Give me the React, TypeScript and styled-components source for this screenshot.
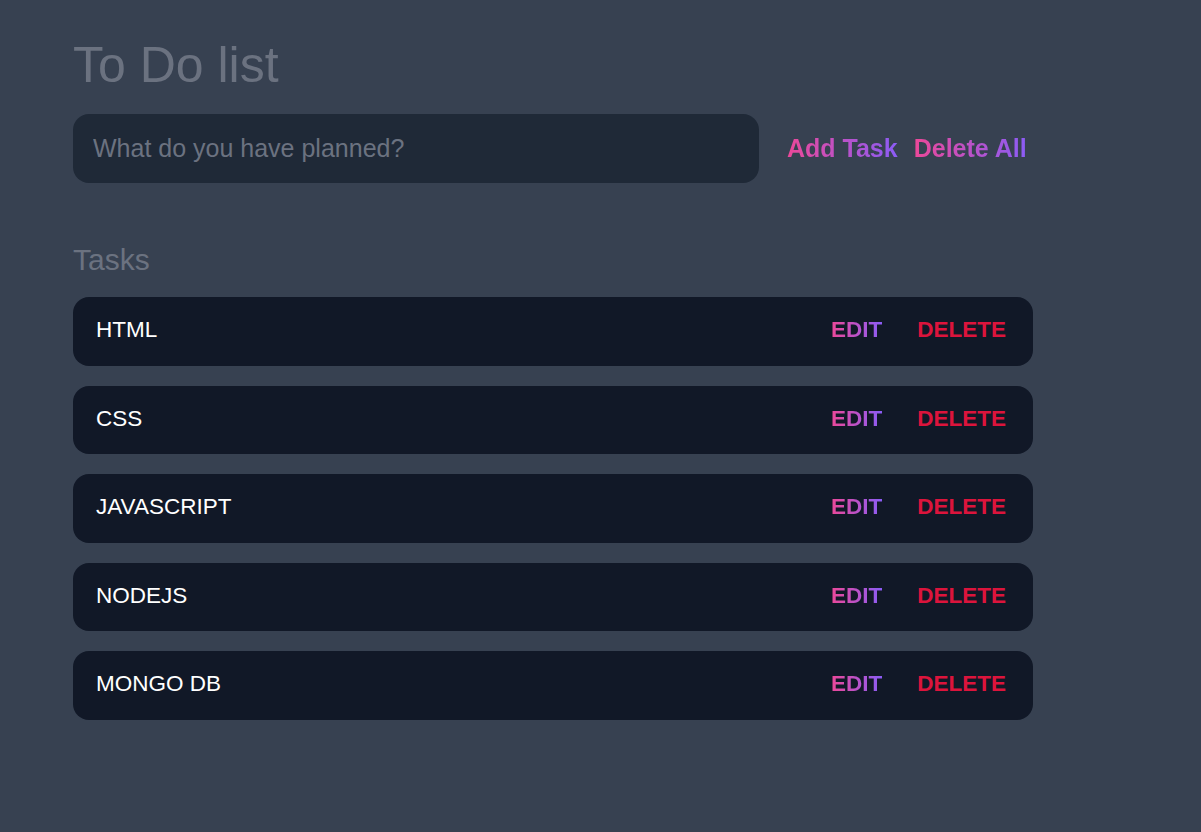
import React from "react";
import styled, { createGlobalStyle } from "styled-components";

const GlobalStyle = createGlobalStyle`
  html, body {
    margin: 0;
    padding: 0;
    background: #374151;
    font-family: "Liberation Sans", Arial, sans-serif;
  }
  * { box-sizing: border-box; }
`;

const Page = styled.div`
  min-height: 832px;
  background: #374151;
  padding: 40px 0 0 73px;
`;

const Title = styled.h1`
  margin: 0;
  font-size: 50px;
  line-height: 50px;
  font-weight: 400;
  color: #6b7280;
`;

const Form = styled.div`
  display: flex;
  align-items: center;
  margin-top: 24px;
`;

const Input = styled.input`
  width: 686px;
  height: 69px;
  border: none;
  outline: none;
  border-radius: 16px;
  background: #1f2937;
  padding: 0 20px;
  font-family: "Liberation Sans", Arial, sans-serif;
  font-size: 25px;
  color: #e5e7eb;
  &::placeholder {
    color: #6b7280;
  }
`;

const Actions = styled.div`
  display: flex;
  align-items: center;
  gap: 16px;
  margin-left: 28px;
`;

const GradientButton = styled.button<{ $size?: number }>`
  border: none;
  padding: 0;
  background: linear-gradient(90deg, #ec4899, #8b5cf6);
  -webkit-background-clip: text;
  background-clip: text;
  color: transparent;
  font-family: "Liberation Sans", Arial, sans-serif;
  font-weight: 700;
  font-size: ${(p) => p.$size ?? 25}px;
  line-height: 1;
  cursor: pointer;
`;

const SectionTitle = styled.h2`
  margin: 62px 0 0;
  font-size: 30px;
  line-height: 30px;
  font-weight: 400;
  color: #6b7280;
`;

const List = styled.ul`
  list-style: none;
  margin: 22px 0 0;
  padding: 0;
  width: 960px;
  display: flex;
  flex-direction: column;
  gap: 20px;
`;

const Item = styled.li`
  height: 68.5px;
  display: flex;
  align-items: center;
  justify-content: space-between;
  padding: 0 27px 2px 23px;
  background: #111827;
  border-radius: 16px;
`;

const ItemText = styled.span`
  font-size: 22.5px;
  color: #ffffff;
`;

const ItemActions = styled.div`
  display: flex;
  align-items: center;
  gap: 35px;
`;

const DeleteButton = styled.button`
  border: none;
  padding: 0;
  background: none;
  color: #dc143c;
  font-family: "Liberation Sans", Arial, sans-serif;
  font-weight: 700;
  font-size: 22.5px;
  line-height: 1;
  cursor: pointer;
`;

const tasks = ["HTML", "CSS", "JAVASCRIPT", "NODEJS", "MONGO DB"];

export default function App() {
  return (
    <>
      <GlobalStyle />
      <Page>
        <Title>To Do list</Title>
        <Form>
          <Input placeholder="What do you have planned?" />
          <Actions>
            <GradientButton>Add Task</GradientButton>
            <GradientButton>Delete All</GradientButton>
          </Actions>
        </Form>
        <SectionTitle>Tasks</SectionTitle>
        <List>
          {tasks.map((t) => (
            <Item key={t}>
              <ItemText>{t}</ItemText>
              <ItemActions>
                <GradientButton $size={22.5}>EDIT</GradientButton>
                <DeleteButton>DELETE</DeleteButton>
              </ItemActions>
            </Item>
          ))}
        </List>
      </Page>
    </>
  );
}
